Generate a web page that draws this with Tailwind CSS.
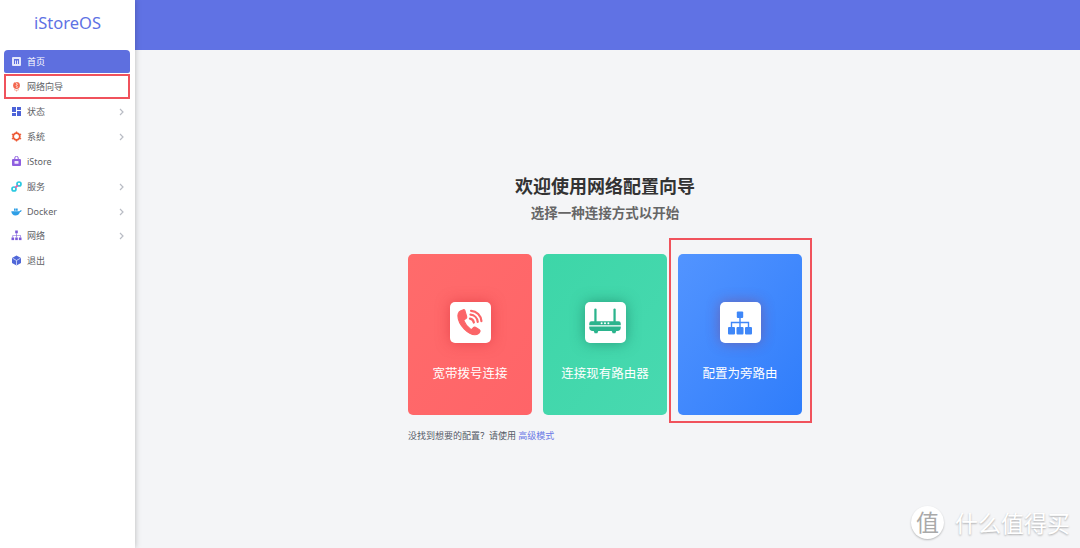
<!DOCTYPE html>
<html lang="zh-CN">
<head>
  <meta charset="UTF-8">
  <meta name="viewport" content="width=device-width, initial-scale=1.0">
  <title>iStoreOS</title>
  <script src="https://cdn.jsdelivr.net/npm/@tailwindcss/browser@4"></script>
</head>
<body class="h-[548px] w-[1080px] overflow-hidden bg-[#f4f5f7] font-['Noto_Sans','Noto_Sans_CJK_SC',sans-serif]">
  <div class="flex h-[548px]">
    <!-- Sidebar -->
    <aside class="relative z-10 flex w-[135px] shrink-0 flex-col bg-white shadow-[0_0_6px_rgba(0,0,0,0.25)]">
      <div class="flex h-[50px] items-center justify-center pb-1 text-[16.500px] text-[#5e72e4]">iStoreOS</div>
      <nav class="flex flex-col">
        <a class="mx-1 flex h-[23px] w-[126px] items-center gap-[5px] rounded-t-[4px] rounded-b-[2px] bg-[#5e6fdf] pl-[7px] text-[9px] text-white">
          <svg class="size-[11px]" viewBox="0 0 11 11"><rect x="1" y="1" width="9" height="9" rx="1" fill="#e3e6fa"/><path d="M3 3h5v5h-1V4.500H6V8H5V4.500H4V8H3z" fill="#5e6fdf"/></svg>
          首页
        </a>
        <a class="relative mx-1 mt-px flex h-[25px] items-center gap-[5px] pl-[7px] text-[9px] text-[#606266]">
          <svg class="size-[11px]" viewBox="0 0 11 11"><circle cx="5.500" cy="4.500" r="3.400" fill="#f3674f"/><path d="M4.500 1.500l2 1.500-1.500 1.500 1.500 1.200-1 1.300" fill="none" stroke="#fde3dc" stroke-width="1"/><path d="M3 8.500c1.500 1 3.500 1 5 0M5.500 9v1.500" fill="none" stroke="#f3a08f" stroke-width=".9"/></svg>
          网络向导
          <span class="absolute inset-y-0 right-px left-0 border-2 border-[#f0525c]"></span>
        </a>
        <a class="mx-1 flex h-[25px] items-center gap-[5px] pl-[7px] text-[9px] text-[#606266]">
          <svg class="size-[11px]" viewBox="0 0 11 11" fill="#4d63d8"><rect x="1" y="1" width="4" height="5"/><rect x="6" y="1" width="4" height="3"/><rect x="1" y="7" width="4" height="3"/><rect x="6" y="5" width="4" height="5"/></svg>
          状态
          <svg class="mr-[7px] ml-auto h-[8px] w-[5px]" viewBox="0 0 5 8"><path d="M1 1l3 3-3 3" fill="none" stroke="#b9bcc4" stroke-width="1.200"/></svg>
        </a>
        <a class="mx-1 flex h-[25px] items-center gap-[5px] pl-[7px] text-[9px] text-[#606266]">
          <svg class="size-[11px]" viewBox="0 0 11 11"><circle cx="5.500" cy="5.500" r="3.300" fill="none" stroke="#ed5a36" stroke-width="1.800"/><path d="M5.500.5v2M5.500 8.500v2M.9 3l1.800 1M8.300 7l1.800 1M.9 8l1.800-1M8.300 4l1.800-1" stroke="#ed5a36" stroke-width="1.300"/></svg>
          系统
          <svg class="mr-[7px] ml-auto h-[8px] w-[5px]" viewBox="0 0 5 8"><path d="M1 1l3 3-3 3" fill="none" stroke="#b9bcc4" stroke-width="1.200"/></svg>
        </a>
        <a class="mx-1 flex h-[25px] items-center gap-[5px] pl-[7px] text-[9px] text-[#606266]">
          <svg class="size-[11px]" viewBox="0 0 11 11"><path d="M3.800 3V2a1.700 1.700 0 0 1 3.400 0v1" fill="none" stroke="#8f5fe0" stroke-width="1"/><path d="M2 3h7a1 1 0 0 1 1 1v5a1 1 0 0 1-1 1H2a1 1 0 0 1-1-1V4a1 1 0 0 1 1-1z" fill="#8f5fe0"/><rect x="3.500" y="5" width="4" height="2.800" rx=".5" fill="#efe8fb"/></svg>
          iStore
        </a>
        <a class="mx-1 flex h-[25px] items-center gap-[5px] pl-[7px] text-[9px] text-[#606266]">
          <svg class="size-[11px]" viewBox="0 0 11 11" fill="none" stroke-width="1.700"><circle cx="3" cy="8" r="2" stroke="#29c8e0"/><circle cx="8" cy="3" r="2" stroke="#29c8e0"/><path d="M4.300 6.700l2.400-2.400" stroke="#e85fa8"/></svg>
          服务
          <svg class="mr-[7px] ml-auto h-[8px] w-[5px]" viewBox="0 0 5 8"><path d="M1 1l3 3-3 3" fill="none" stroke="#b9bcc4" stroke-width="1.200"/></svg>
        </a>
        <a class="mx-1 flex h-[25px] items-center gap-[5px] pl-[7px] text-[9px] text-[#606266]">
          <svg class="size-[11px]" viewBox="0 0 11 11" fill="#2f9fe6"><path d="M.3 5.200h8.200c.5-1 1.300-1.200 2.200-.8-.4 1.100-1 1.500-1.700 1.600C8.300 8.500 6.500 9.500 4.500 9.500 2 9.500.5 7.800.3 5.200z"/><path d="M3 2.500h1.700v2.200H3zM5 2.500h1.700v2.200H5z"/></svg>
          Docker
          <svg class="mr-[7px] ml-auto h-[8px] w-[5px]" viewBox="0 0 5 8"><path d="M1 1l3 3-3 3" fill="none" stroke="#b9bcc4" stroke-width="1.200"/></svg>
        </a>
        <a class="mx-1 -mt-px flex h-[25px] items-center gap-[5px] pl-[7px] text-[9px] text-[#606266]">
          <svg class="size-[11px]" viewBox="0 0 11 11" fill="#7c5ad9"><rect x="4.200" y=".5" width="2.600" height="2.800"/><rect x=".5" y="7.500" width="2.600" height="2.600"/><rect x="4.200" y="7.500" width="2.600" height="2.600"/><rect x="7.900" y="7.500" width="2.600" height="2.600"/><path d="M5.200 3.300h.6v1.900h4v2.300h-.6V5.800H5.800v1.700h-.6V5.800H2.100v1.700h-.6V5.200h3.700z"/></svg>
          网络
          <svg class="mr-[7px] ml-auto h-[8px] w-[5px]" viewBox="0 0 5 8"><path d="M1 1l3 3-3 3" fill="none" stroke="#b9bcc4" stroke-width="1.200"/></svg>
        </a>
        <a class="mx-1 flex h-[25px] items-center gap-[5px] pl-[7px] text-[9px] text-[#606266]">
          <svg class="size-[11px]" viewBox="0 0 11 11"><path d="M5.500.5l4.500 2.400v5.200l-4.500 2.400L1 8.100V2.900z" fill="#5067d8"/><path d="M1.500 3.200l4 2.300 4-2.300M5.500 5.500v5" fill="none" stroke="#dfe4fa" stroke-width=".8"/></svg>
          退出
        </a>
      </nav>
    </aside>

    <!-- Main -->
    <div class="relative flex min-w-0 flex-1 flex-col">
      <header class="h-[50px] bg-[#6072e4]"></header>
      <main class="flex flex-1 flex-col items-center pt-[123px] pr-[5px]">
        <h1 class="text-[18px] leading-[26px] font-bold text-[#333]">欢迎使用网络配置向导</h1>
        <h2 class="mt-[4px] text-[13.500px] leading-[20px] font-bold text-[#666]">选择一种连接方式以开始</h2>
        <div class="mt-[31px] flex gap-[11px]">
          <button class="flex h-[161px] w-[124px] flex-col items-center rounded-[5px] bg-linear-to-br from-[#ff6b6b] to-[#ff6468] pt-[48px] text-[12.500px] text-white">
            <span class="flex size-[41px] items-center justify-center rounded-[5px] bg-white shadow-[0_0_14px_rgba(210,40,50,0.5)]">
              <svg class="size-[29px]" viewBox="0 0 26 26" fill="none"><path d="M6.500 1.500c-2.500.6-4.800 2.500-4.800 5.500 0 4 2.500 8.500 5.800 12 3 3 6.500 5 9.500 5 2 0 3.800-1 4.500-2.800.3-.7 0-1.300-.6-1.700l-3.500-2.200c-.7-.4-1.300-.3-1.800.3l-1.100 1.300c-.4.400-.9.400-1.400.1-2.600-1.700-4.700-4.400-5.900-7.400-.2-.5 0-1 .4-1.300l1.400-.9c.6-.4.8-1 .6-1.700L8 2.500C7.800 1.700 7.200 1.300 6.500 1.500z" fill="#fb6568" stroke="#fb6568"/><path d="M12.500 9.500c1.800.3 3.200 1.700 3.500 3.500M13 6c3.500.3 6.200 3 6.500 6.500M13.500 2.500c5 .3 9 4.200 9.300 9.300" stroke="#fb6568" stroke-width="2" stroke-linecap="round"/></svg>
            </span>
            <span class="mt-[22px] leading-[18px]">宽带拨号连接</span>
          </button>
          <button class="flex h-[161px] w-[124px] flex-col items-center rounded-[5px] bg-linear-to-br from-[#3dd6a8] to-[#48d9b0] pt-[48px] text-[12.500px] text-white">
            <span class="flex size-[41px] items-center justify-center rounded-[5px] bg-white shadow-[0_0_14px_rgba(20,110,85,0.55)]">
              <svg class="size-[36px]" viewBox="0 0 32 32" fill="#2bb48d"><rect x="6.500" y="3" width="2" height="14" rx="1"/><rect x="23.500" y="3" width="2" height="14" rx="1"/><path d="M2 16.500a2 2 0 0 1 2-2h24a2 2 0 0 1 2 2V18H2z"/><path d="M2 19h28v1a3 3 0 0 1-3 3H5a3 3 0 0 1-3-3z"/><path d="M6 23h4l-.8 2.200H6.800zM22 23h4l-.800 2.200h-2.400z"/><circle cx="13" cy="16.200" r=".9" fill="#fff"/><circle cx="16" cy="16.200" r=".9" fill="#fff"/><circle cx="19" cy="16.200" r=".9" fill="#fff"/></svg>
            </span>
            <span class="mt-[22px] leading-[18px]">连接现有路由器</span>
          </button>
          <div class="relative">
            <button class="flex h-[161px] w-[124px] flex-col items-center rounded-[5px] bg-linear-to-br from-[#5294ff] to-[#2f7dfb] pt-[48px] text-[12.500px] text-white">
              <span class="flex size-[41px] items-center justify-center rounded-[5px] bg-white shadow-[0_0_14px_rgba(150,50,90,0.45)]">
                <svg class="size-[28px]" viewBox="0 0 28 28" fill="#3f87f8"><rect x="10.800" y="2.500" width="6.400" height="6.500" rx="1"/><path d="M13.300 9h1.400v3.800H23.200V18h-1.400v-3.800h-7.100V18h-1.400v-3.800H6.200V18H4.800v-5.200h8.500z"/><rect x="2" y="18" width="7" height="7.500" rx="1"/><rect x="10.500" y="18" width="7" height="7.500" rx="1"/><rect x="19" y="18" width="7" height="7.500" rx="1"/></svg>
              </span>
              <span class="mt-[22px] leading-[18px]">配置为旁路由</span>
            </button>
            <span class="absolute -top-[16px] -right-[10px] -bottom-[8px] -left-[9px] border-2 border-[#f0525c]"></span>
          </div>
        </div>
        <p class="mt-[14px] w-[394px] text-[9px] leading-[14px] text-[#555a66]">没找到想要的配置？请使用 <a class="text-[#6b78e6]">高级模式</a></p>
      </main>

      <!-- Watermark -->
      <div class="absolute right-[10px] bottom-[9px] flex items-center gap-[11px] text-white [text-shadow:0_1px_2px_rgba(0,0,0,0.3)]">
        <span class="flex size-[33px] items-center justify-center rounded-full bg-white text-[23px] leading-none text-[#a9a9a9] shadow-[0_1px_2px_rgba(0,0,0,0.25)] [text-shadow:none]">值</span>
        <span class="text-[23px] leading-[30px]">什么值得买</span>
      </div>
    </div>
  </div>
</body>
</html>
